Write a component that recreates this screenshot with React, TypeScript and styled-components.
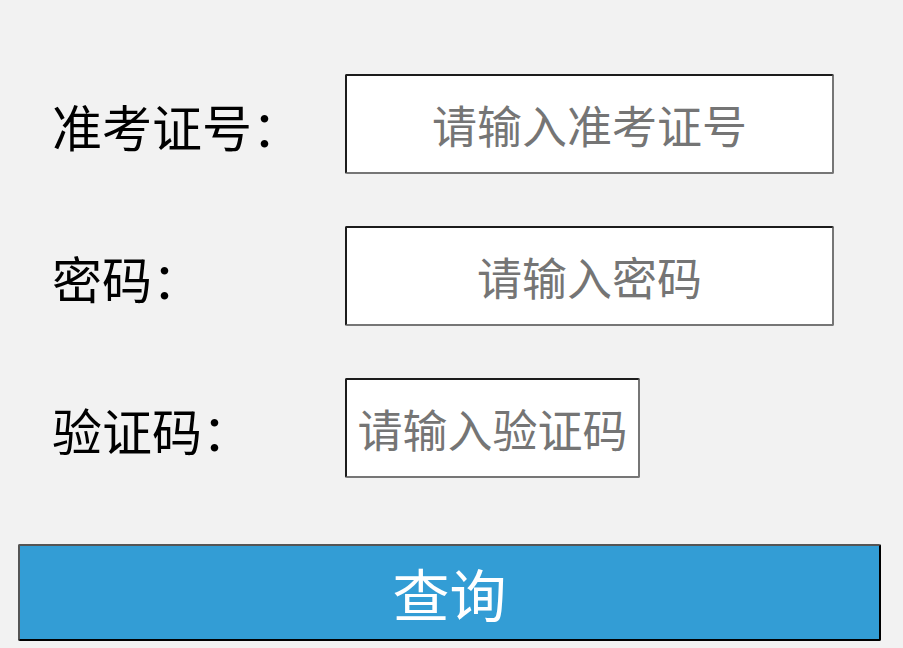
import React, { useState } from 'react';
import styled, { createGlobalStyle } from 'styled-components';

const GlobalStyle = createGlobalStyle`
  html, body {
    margin: 0;
    padding: 0;
    background: #f2f2f2;
  }
  body {
    font-family: "Noto Sans CJK SC", "Noto Sans", sans-serif;
  }
`;

const fields = [
  { key: 'ticket', label: '准考证号：', placeholder: '请输入准考证号', width: 489 },
  { key: 'password', label: '密码：', placeholder: '请输入密码', width: 489 },
  { key: 'code', label: '验证码：', placeholder: '请输入验证码', width: 295 },
];

const App = () => {
  const [values, setValues] = useState<Record<string, string>>({});

  return (
    <Wrap>
      <GlobalStyle />
      <Form onSubmit={(e) => e.preventDefault()}>
        <Fields>
          {fields.map((f) => (
            <Row key={f.key}>
              <Label htmlFor={f.key}>{f.label}</Label>
              <Input
                id={f.key}
                type={f.key === 'password' ? 'password' : 'text'}
                placeholder={f.placeholder}
                $width={f.width}
                value={values[f.key] || ''}
                onChange={(e) => setValues({ ...values, [f.key]: e.target.value })}
              />
            </Row>
          ))}
        </Fields>
        <SubmitButton type="submit">查询</SubmitButton>
      </Form>
    </Wrap>
  );
};

export default App;

const Wrap = styled.div`
  width: 100%;
  min-height: 100vh;
  box-sizing: border-box;
  padding: 74px 22px 0 18px;
`;

const Form = styled.form`
  display: flex;
  flex-direction: column;
  gap: 66px;
`;

const Fields = styled.div`
  display: flex;
  flex-direction: column;
  gap: 52px;
  padding-left: 34px;
`;

const Row = styled.div`
  display: flex;
  align-items: center;
  height: 100px;
`;

const Label = styled.label`
  width: 293px;
  font-size: 50px;
  line-height: 1;
  color: #000;
  margin-top: 1px;
  white-space: nowrap;
`;

const Input = styled.input<{ $width: number }>`
  box-sizing: border-box;
  width: ${(p) => p.$width}px;
  height: 100px;
  padding: 0;
  background: #fff;
  border-width: 2px;
  border-style: solid;
  border-color: #1c1c1c #767676 #767676 #1c1c1c;
  border-radius: 2px;
  font-family: "Noto Sans CJK SC", "Noto Sans", sans-serif;
  font-size: 45px;
  text-align: center;
  color: #333;
  outline: none;
  &::placeholder {
    color: #757575;
  }
`;

const SubmitButton = styled.button`
  box-sizing: border-box;
  width: 863px;
  height: 97px;
  background: #339dd5;
  border-width: 2px;
  border-style: solid;
  border-color: #555 #000 #000 #555;
  border-radius: 2px;
  color: #fff;
  font-family: "Noto Sans CJK SC", "Noto Sans", sans-serif;
  font-size: 57px;
  line-height: 1;
  cursor: pointer;
  padding: 0;
`;
